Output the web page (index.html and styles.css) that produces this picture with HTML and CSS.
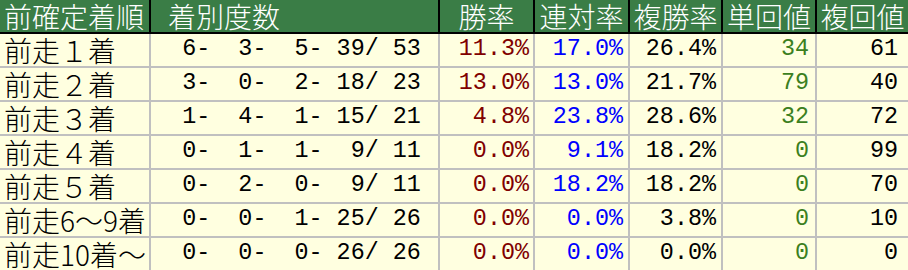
FILE: index.html
```html
<!DOCTYPE html>
<html lang="ja">
<head>
<meta charset="utf-8">
<title>前確定着順</title>
<link rel="stylesheet" href="styles.css">
</head>
<body>
<div class="tbl">
  <div class="row head">
    <div class="c c1 hl">前確定着順</div>
    <div class="c c2 hl2">着別度数</div>
    <div class="c c3 hc">勝率</div>
    <div class="c c4 hc">連対率</div>
    <div class="c c5 hc">複勝率</div>
    <div class="c c6 hc">単回値</div>
    <div class="c c7 hc">複回値</div>
  </div>
  <div class="row">
    <div class="c c1 lab">前走１着</div>
    <div class="c c2 num cnt"> 6-  3-  5- 39/ 53</div>
    <div class="c c3 num r win">11.3%</div>
    <div class="c c4 num r ren">17.0%</div>
    <div class="c c5 num r">26.4%</div>
    <div class="c c6 num r tan">34</div>
    <div class="c c7 num r">61</div>
  </div>
  <div class="row">
    <div class="c c1 lab">前走２着</div>
    <div class="c c2 num cnt"> 3-  0-  2- 18/ 23</div>
    <div class="c c3 num r win">13.0%</div>
    <div class="c c4 num r ren">13.0%</div>
    <div class="c c5 num r">21.7%</div>
    <div class="c c6 num r tan">79</div>
    <div class="c c7 num r">40</div>
  </div>
  <div class="row">
    <div class="c c1 lab">前走３着</div>
    <div class="c c2 num cnt"> 1-  4-  1- 15/ 21</div>
    <div class="c c3 num r win">4.8%</div>
    <div class="c c4 num r ren">23.8%</div>
    <div class="c c5 num r">28.6%</div>
    <div class="c c6 num r tan">32</div>
    <div class="c c7 num r">72</div>
  </div>
  <div class="row">
    <div class="c c1 lab">前走４着</div>
    <div class="c c2 num cnt"> 0-  1-  1-  9/ 11</div>
    <div class="c c3 num r win">0.0%</div>
    <div class="c c4 num r ren">9.1%</div>
    <div class="c c5 num r">18.2%</div>
    <div class="c c6 num r tan">0</div>
    <div class="c c7 num r">99</div>
  </div>
  <div class="row">
    <div class="c c1 lab">前走５着</div>
    <div class="c c2 num cnt"> 0-  2-  0-  9/ 11</div>
    <div class="c c3 num r win">0.0%</div>
    <div class="c c4 num r ren">18.2%</div>
    <div class="c c5 num r">18.2%</div>
    <div class="c c6 num r tan">0</div>
    <div class="c c7 num r">70</div>
  </div>
  <div class="row">
    <div class="c c1 lab">前走6〜9着</div>
    <div class="c c2 num cnt"> 0-  0-  1- 25/ 26</div>
    <div class="c c3 num r win">0.0%</div>
    <div class="c c4 num r ren">0.0%</div>
    <div class="c c5 num r">3.8%</div>
    <div class="c c6 num r tan">0</div>
    <div class="c c7 num r">10</div>
  </div>
  <div class="row">
    <div class="c c1 lab">前走10着〜</div>
    <div class="c c2 num cnt"> 0-  0-  0- 26/ 26</div>
    <div class="c c3 num r win">0.0%</div>
    <div class="c c4 num r ren">0.0%</div>
    <div class="c c5 num r">0.0%</div>
    <div class="c c6 num r tan">0</div>
    <div class="c c7 num r">0</div>
  </div>
</div>
</body>
</html>
```

FILE: styles.css
```css
html, body {
  margin: 0;
  padding: 0;
  background: #ffffe0;
}
.tbl {
  width: 908px;
  display: flex;
  flex-direction: column;
  font-family: "Noto Sans CJK JP", sans-serif;
}
.row {
  display: flex;
  height: 34px;
  background: #ffffe0;
}
.c {
  box-sizing: border-box;
  height: 34px;
  border-right: 2px solid #c0c0c0;
  border-bottom: 2px solid #c0c0c0;
  display: flex;
  align-items: center;
  white-space: pre;
  color: #000;
}
.c1 { width: 151px; }
.c2 { width: 289px; }
.c3 { width: 95px; }
.c4 { width: 95px; }
.c5 { width: 93px; }
.c6 { width: 94px; }
.c7 { width: 91px; border-right: none; }

.head { background: #3a7d46; }
.head .c {
  border-color: #000;
  color: #fff;
  font-size: 28px;
  line-height: 1;
  font-weight: 300;
}
.hl { padding-left: 4px; }
.hl2 { padding-left: 17px; }
.hc { justify-content: center; }

.lab {
  font-size: 28px;
  line-height: 1;
  padding-left: 4px;
  font-weight: 300;
}
.num {
  font-family: "Liberation Mono", monospace;
  font-size: 23.4px;
  line-height: 1;
}
.cnt { justify-content: center; }
.r { justify-content: flex-end; }
.c3.r { padding-right: 4px; }
.c4.r { padding-right: 5px; }
.c5.r { padding-right: 5px; }
.c6.r { padding-right: 6px; }
.c7.r { padding-right: 10px; }
.win { color: #800000; }
.ren { color: #0000ff; }
.tan { color: #3c7f1e; }
```
